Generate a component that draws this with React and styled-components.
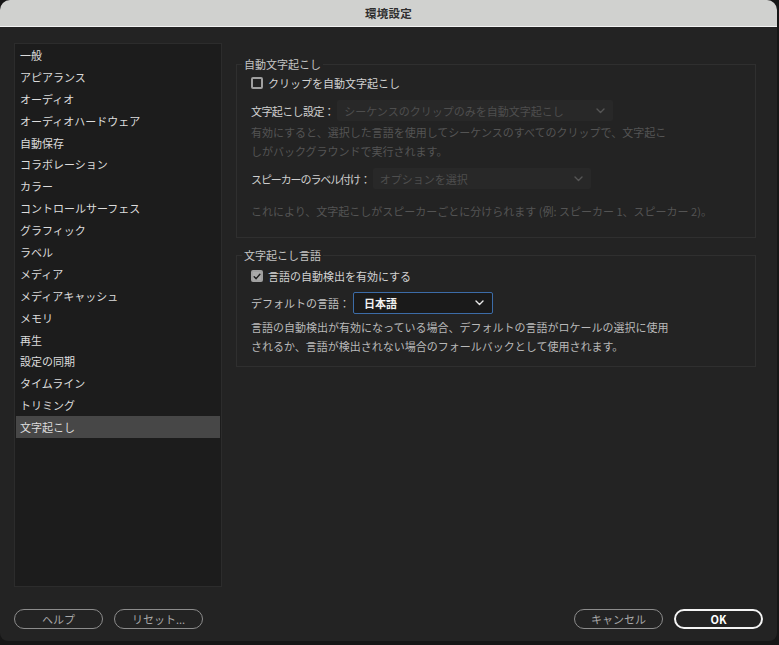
import React from "react";
import styled, { createGlobalStyle } from "styled-components";

const Global = createGlobalStyle`
  html, body { margin: 0; padding: 0; background: #161616; }
  body { font-family: "Noto Sans CJK JP", "Noto Sans", sans-serif; -webkit-font-smoothing: antialiased; }
  * { box-sizing: border-box; }
`;

const Window = styled.div`
  width: 777px;
  height: 641px;
  background: #232323;
  border-radius: 10px 10px 8px 8px;
  overflow: hidden;
  display: flex;
  flex-direction: column;
`;

const TitleBar = styled.div`
  height: 27px;
  flex: none;
  background: #d0d1cf;
  border-bottom: 1px solid #f2f2f2;
  display: flex;
  align-items: center;
  justify-content: center;
  font-size: 11.5px;
  font-weight: 700;
  color: #2e2e2e;
  letter-spacing: 0.2px;
`;

const Body = styled.div`
  display: flex;
  gap: 14px;
  padding: 16px 22px 0 14px;
`;

const Sidebar = styled.ul`
  list-style: none;
  margin: 0;
  padding: 0 1px;
  width: 208px;
  height: 544px;
  flex: none;
  background: #1c1c1c;
  border: 1px solid #2c2c2c;
`;

const NavItem = styled.li`
  height: 21.9px;
  display: flex;
  align-items: center;
  padding-left: 4px;
  font-size: 11px;
  color: #dcdcdc;
  background: ${(p) => (p.$active ? "#474747" : "transparent")};
`;

const Main = styled.div`
  flex: 1;
  display: flex;
  flex-direction: column;
  gap: 9px;
  padding-top: 13px;
`;

const Group = styled.fieldset`
  margin: 0;
  width: 520px;
  border: 1px solid #2f2f2f;
  padding: 0 14px ${(p) => p.$pb}px 14px;
  display: flex;
  flex-direction: column;
  min-width: 0;
`;

const Legend = styled.legend`
  font-size: 11px;
  line-height: 16px;
  color: #c4c4c4;
  padding: 0 2px;
  margin-left: -9px;
`;

const CheckRow = styled.label`
  display: flex;
  align-items: center;
  gap: 5px;
  height: 20px;
  margin-top: ${(p) => p.$mt}px;
  font-size: 11px;
  color: #d2d2d2;
`;

const Box = styled.span`
  width: 12px;
  height: 12px;
  border-radius: 2px;
  border: 2px solid #a0a0a0;
  background: ${(p) => (p.$checked ? "#aaaaaa" : "transparent")};
  display: flex;
  align-items: center;
  justify-content: center;
`;

const FieldRow = styled.div`
  display: flex;
  align-items: center;
  margin-top: ${(p) => p.$mt}px;
  font-size: 11px;
  color: ${(p) => (p.$dim ? "#c2c2c2" : "#cfcfcf")};
`;

const FieldLabel = styled.span`
  letter-spacing: ${(p) => p.$ls || 0}px;
`;

const Select = styled.div`
  width: ${(p) => p.$w}px;
  height: ${(p) => (p.$active ? 22 : 21)}px;
  margin-left: 3px;
  display: flex;
  align-items: center;
  justify-content: space-between;
  padding: 0 8px 0 ${(p) => (p.$active ? 10 : 7)}px;
  font-size: 11px;
  background: ${(p) => (p.$active ? "#1a1a1a" : "#282828")};
  color: ${(p) => (p.$active ? "#f2f2f2" : "#4e4e4e")};
  font-weight: ${(p) => (p.$active ? 700 : 400)};
  border: ${(p) => (p.$active ? "1.5px solid #3c6ca8" : "none")};
  border-radius: 2px;
`;

const Desc = styled.p`
  margin: ${(p) => p.$mt}px 0 0;
  font-size: 11px;
  line-height: 19px;
  color: ${(p) => (p.$dim ? "#545454" : "#b9b9b9")};
  width: ${(p) => p.$w || 421}px;
`;

const Footer = styled.div`
  display: flex;
  justify-content: space-between;
  padding: 22px 14px 0 14px;
`;

const ButtonGroup = styled.div`
  display: flex;
  gap: 11px;
`;

const Pill = styled.button`
  width: 89px;
  height: 20px;
  border-radius: 10px;
  background: transparent;
  border: ${(p) => (p.$primary ? "2px solid #f4f4f4" : "1.5px solid #8c8c8c")};
  color: ${(p) => (p.$primary ? "#ffffff" : "#a8a8a8")};
  font-family: inherit;
  font-size: 11px;
  font-weight: ${(p) => (p.$primary ? 700 : 400)};
  padding: 0;
  display: flex;
  align-items: center;
  justify-content: center;
`;

const Chevron = ({ color }) => (
  <svg width="9" height="6" viewBox="0 0 9 6">
    <path d="M1 1l3.5 3.5L8 1" fill="none" stroke={color} strokeWidth="1.4" strokeLinecap="round" strokeLinejoin="round" />
  </svg>
);

const Check = () => (
  <svg width="10" height="9" viewBox="0 0 10 9">
    <path d="M1.5 4.8l2.4 2.4L8.6 1.6" fill="none" stroke="#1e1e1e" strokeWidth="1.8" strokeLinecap="round" strokeLinejoin="round" />
  </svg>
);

const items = [
  "一般",
  "アピアランス",
  "オーディオ",
  "オーディオハードウェア",
  "自動保存",
  "コラボレーション",
  "カラー",
  "コントロールサーフェス",
  "グラフィック",
  "ラベル",
  "メディア",
  "メディアキャッシュ",
  "メモリ",
  "再生",
  "設定の同期",
  "タイムライン",
  "トリミング",
  "文字起こし",
];

export default function App() {
  return (
    <>
      <Global />
      <Window>
        <TitleBar>環境設定</TitleBar>
        <Body>
          <Sidebar>
            {items.map((t) => (
              <NavItem key={t} $active={t === "文字起こし"}>
                {t}
              </NavItem>
            ))}
          </Sidebar>
          <Main>
            <Group $pb={16}>
              <Legend>自動文字起こし</Legend>
              <CheckRow $mt={1}>
                <Box />
                クリップを自動文字起こし
              </CheckRow>
              <FieldRow $mt={7}>
                <FieldLabel $ls={-0.6}>文字起こし設定：</FieldLabel>
                <Select $w={276}>
                  シーケンスのクリップのみを自動文字起こし
                  <Chevron color="#555" />
                </Select>
              </FieldRow>
              <Desc $dim $mt={2}>
                有効にすると、選択した言語を使用してシーケンスのすべてのクリップで、文字起こしがバックグラウンドで実行されます。
              </Desc>
              <FieldRow $mt={7}>
                <FieldLabel $ls={-1.1}>スピーカーのラベル付け：</FieldLabel>
                <Select $w={218}>
                  オプションを選択
                  <Chevron color="#555" />
                </Select>
              </FieldRow>
              <Desc $dim $mt={13} $w={490}>
                これにより、文字起こしがスピーカーごとに分けられます (例: スピーカー 1、スピーカー 2)。
              </Desc>
            </Group>
            <Group $pb={10}>
              <Legend>文字起こし言語</Legend>
              <CheckRow $mt={3}>
                <Box $checked>
                  <Check />
                </Box>
                言語の自動検出を有効にする
              </CheckRow>
              <FieldRow $mt={6} $dim>
                <FieldLabel>デフォルトの言語：</FieldLabel>
                <Select $w={140} $active>
                  日本語
                  <Chevron color="#e8e8e8" />
                </Select>
              </FieldRow>
              <Desc $mt={4}>
                言語の自動検出が有効になっている場合、デフォルトの言語がロケールの選択に使用されるか、言語が検出されない場合のフォールバックとして使用されます。
              </Desc>
            </Group>
          </Main>
        </Body>
        <Footer>
          <ButtonGroup>
            <Pill>ヘルプ</Pill>
            <Pill>リセット...</Pill>
          </ButtonGroup>
          <ButtonGroup>
            <Pill>キャンセル</Pill>
            <Pill $primary>OK</Pill>
          </ButtonGroup>
        </Footer>
      </Window>
    </>
  );
}
